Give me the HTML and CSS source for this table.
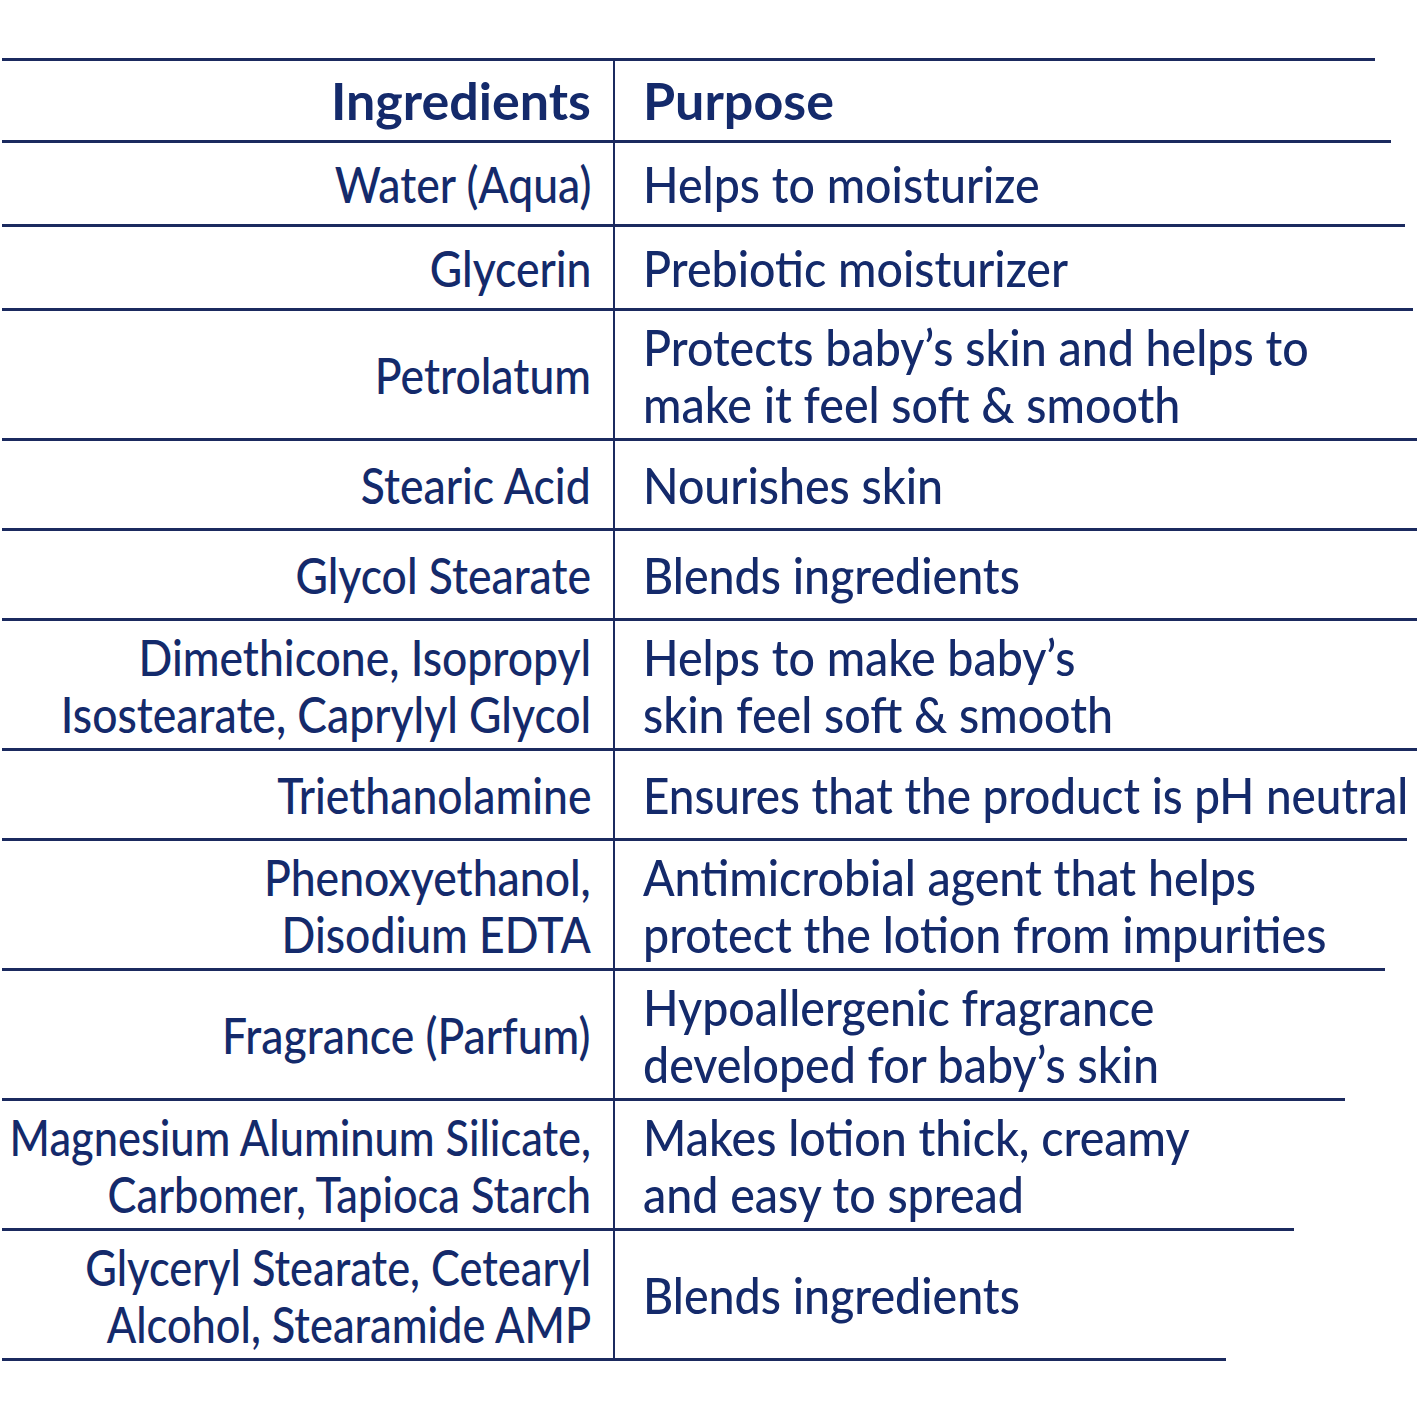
FILE: index.html
```html
<!DOCTYPE html>
<html lang="en">
<head>
<meta charset="utf-8">
<title>Ingredients</title>
<link rel="stylesheet" href="styles.css">
</head>
<body>
<div class="sheet">
  <div class="rule rule-0"></div>
  <div class="row row-head"><div class="ing"><span class="t">Ingredients</span></div><div class="pur"><span class="t">Purpose</span></div></div>
  <div class="rule rule-1"></div>
  <div class="row row-s"><div class="ing"><span class="t">Water (Aqua)</span></div><div class="pur"><span class="t">Helps to moisturize</span></div></div>
  <div class="rule rule-2"></div>
  <div class="row row-s"><div class="ing"><span class="t">Glycerin</span></div><div class="pur"><span class="t">Prebiotic moisturizer</span></div></div>
  <div class="rule rule-3"></div>
  <div class="row row-d"><div class="ing"><span class="t">Petrolatum</span></div><div class="pur"><span class="t">Protects baby’s skin and helps to<br>make it feel soft &amp; smooth</span></div></div>
  <div class="rule rule-4"></div>
  <div class="row row-m"><div class="ing"><span class="t">Stearic Acid</span></div><div class="pur"><span class="t">Nourishes skin</span></div></div>
  <div class="rule rule-5"></div>
  <div class="row row-m"><div class="ing"><span class="t">Glycol Stearate</span></div><div class="pur"><span class="t">Blends ingredients</span></div></div>
  <div class="rule rule-6"></div>
  <div class="row row-d"><div class="ing"><span class="t">Dimethicone, Isopropyl<br>Isostearate, Caprylyl Glycol</span></div><div class="pur"><span class="t">Helps to make baby’s<br>skin feel soft &amp; smooth</span></div></div>
  <div class="rule rule-7"></div>
  <div class="row row-m"><div class="ing"><span class="t">Triethanolamine</span></div><div class="pur"><span class="t t-tight">Ensures that the product is pH neutral</span></div></div>
  <div class="rule rule-8"></div>
  <div class="row row-d"><div class="ing"><span class="t">Phenoxyethanol,<br>Disodium EDTA</span></div><div class="pur"><span class="t">Antimicrobial agent that helps<br>protect the lotion from impurities</span></div></div>
  <div class="rule rule-9"></div>
  <div class="row row-d"><div class="ing"><span class="t">Fragrance (Parfum)</span></div><div class="pur"><span class="t">Hypoallergenic fragrance<br>developed for baby’s skin</span></div></div>
  <div class="rule rule-10"></div>
  <div class="row row-d"><div class="ing"><span class="t t-tight">Magnesium Aluminum Silicate,<br>Carbomer, Tapioca Starch</span></div><div class="pur"><span class="t">Makes lotion thick, creamy<br>and easy to spread</span></div></div>
  <div class="rule rule-11"></div>
  <div class="row row-d"><div class="ing"><span class="t t-tight">Glyceryl Stearate, Cetearyl<br>Alcohol, Stearamide AMP</span></div><div class="pur"><span class="t">Blends ingredients</span></div></div>
  <div class="rule rule-12"></div>
</div>
</body>
</html>
```

FILE: styles.css
```css
html, body {
  margin: 0;
  padding: 0;
  background: #ffffff;
}

body {
  font-family: Lato, "Open Sans", sans-serif;
  color: #142a6b;
  overflow-x: hidden;
}

.sheet {
  padding-top: 58px;
  display: flex;
  flex-direction: column;
  overflow: hidden;
}

.rule {
  height: 3px;
  background: #1b2a5f;
  margin-left: 2px;
}

.rule-0 { width: 1373px; }
.rule-1 { width: 1389px; }
.rule-2 { width: 1403px; }
.rule-3 { width: 1411px; }
.rule-4, .rule-5, .rule-6, .rule-7 { width: 1415px; }
.rule-8 { width: 1405px; }
.rule-9 { width: 1383px; }
.rule-10 { width: 1343px; }
.rule-11 { width: 1292px; }
.rule-12 { width: 1224px; }

.row {
  display: grid;
  grid-template-columns: 615px minmax(0, 1fr);
}

.row-head { height: 79px; }
.row-s { height: 81px; }
.row-m { height: 87px; }
.row-d { height: 127px; }

.ing, .pur {
  display: flex;
  align-items: center;
  font-size: 51px;
  line-height: 57px;
  white-space: nowrap;
  font-weight: 500;
  min-width: 0;
}

.ing {
  justify-content: flex-end;
  text-align: right;
  padding-right: 22px;
  border-right: 2px solid #1b2a5f;
}

.pur {
  padding-left: 28px;
  overflow: hidden;
}

.t {
  display: inline-block;
  flex-shrink: 0;
}

.ing .t {
  transform-origin: right center;
  transform: scaleX(0.872);
}

.ing .t-tight {
  transform: scaleX(0.85);
}

.pur .t {
  transform-origin: left center;
  transform: scaleX(0.912);
}

.pur .t-tight {
  transform: scaleX(0.898);
}

.row-head .ing .t,
.row-head .pur .t {
  font-weight: 700;
  transform: scaleX(1.02);
}
```
